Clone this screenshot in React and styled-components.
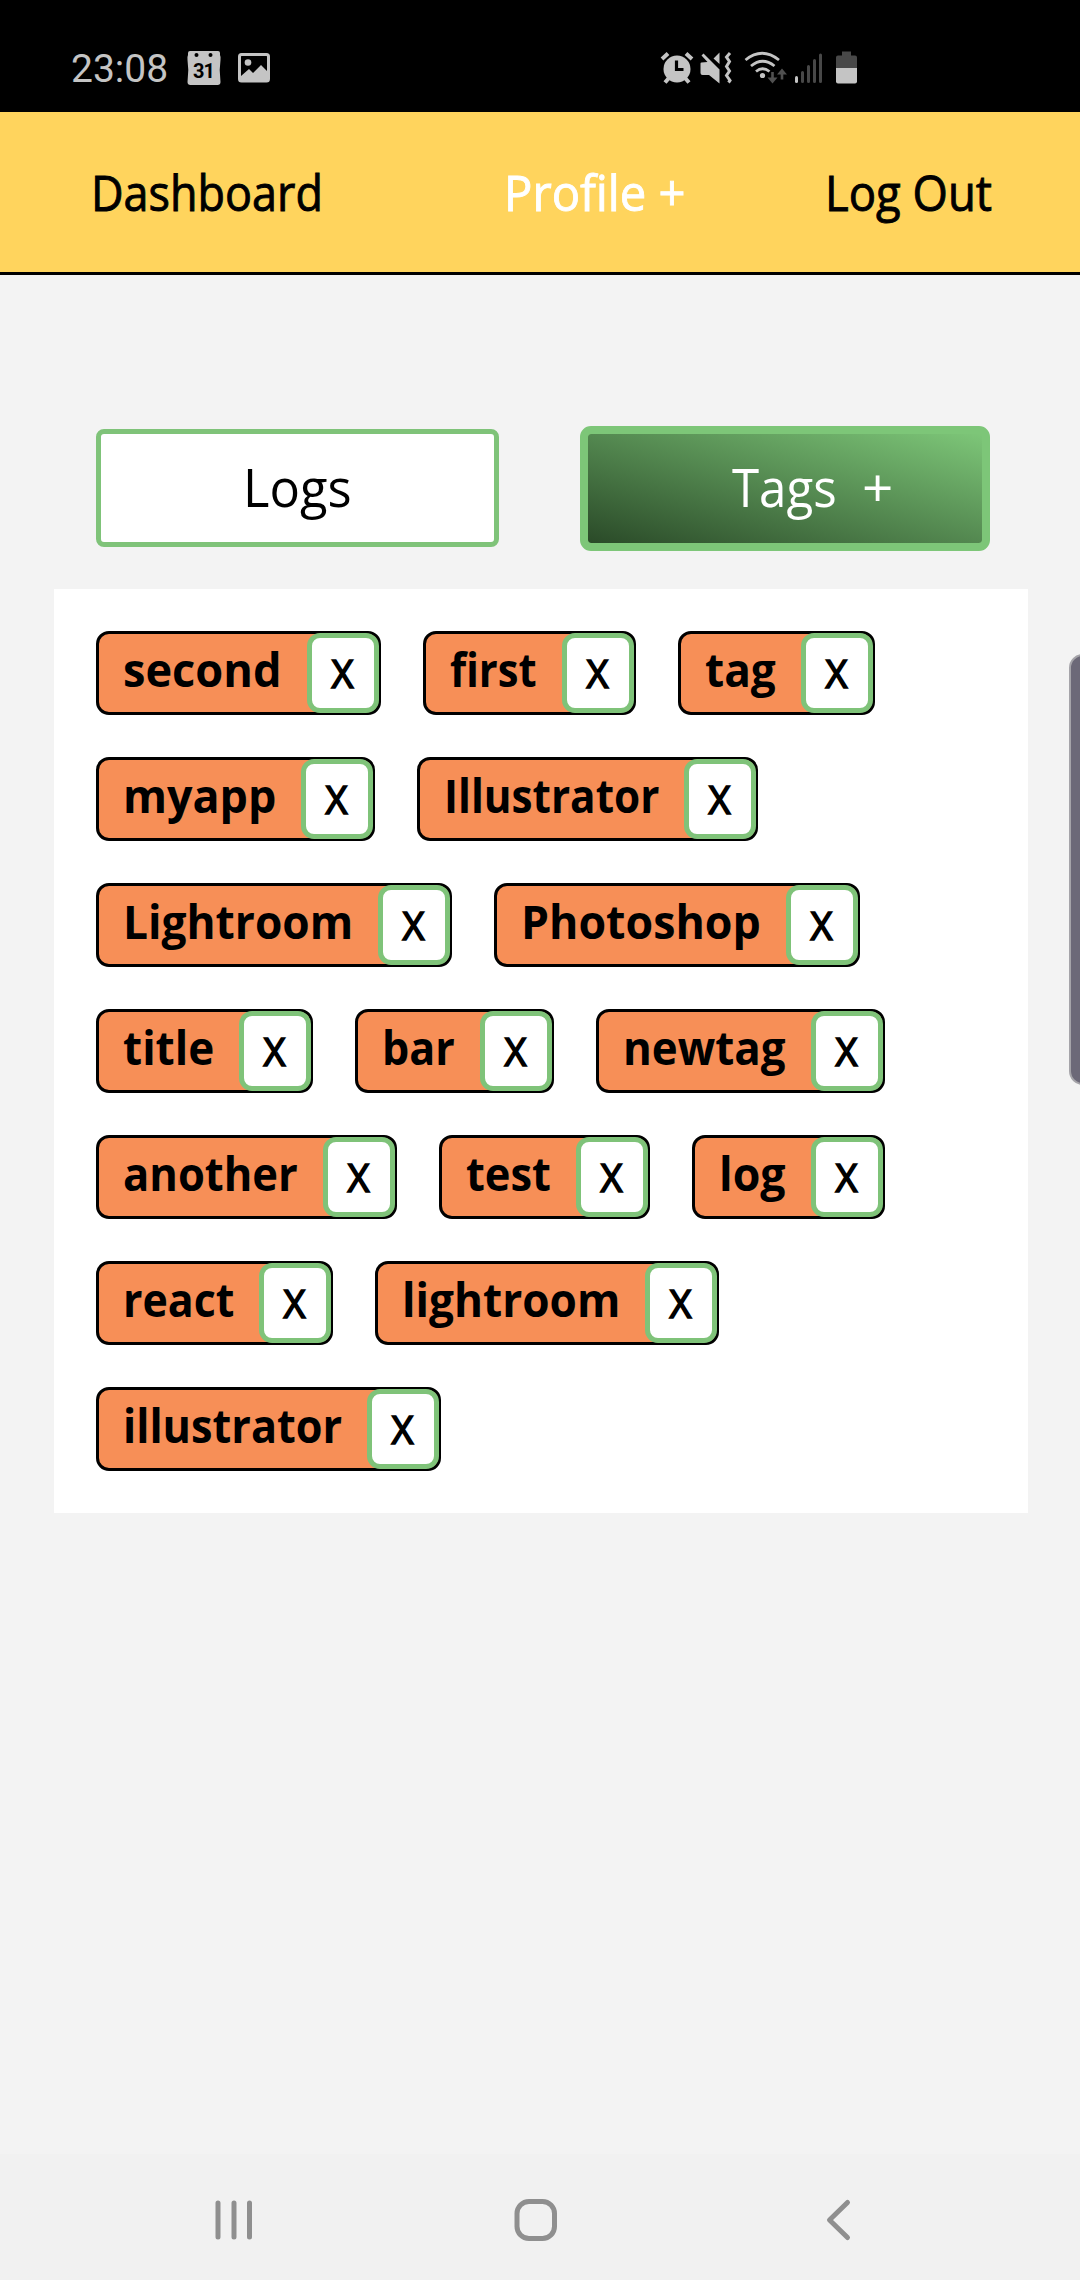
import React, { useLayoutEffect, useRef, useState } from "react";
import styled, { createGlobalStyle } from "styled-components";

const GlobalStyle = createGlobalStyle`
  * { box-sizing: border-box; }
  body { margin: 0; background: #f3f3f3; font-family: "Open Sans", "Noto Sans", sans-serif; }
  button { font: inherit; }
`;

const Screen = styled.div`
  width: 1080px;
  height: 2280px;
  display: flex;
  flex-direction: column;
  background: #f3f3f3;
  position: relative;
  overflow: hidden;
`;

const StatusBar = styled.header`
  height: 112px;
  flex: none;
  background: #000;
  color: #c4c4c4;
  display: flex;
  align-items: flex-start;
  padding: 45px 220px 0 71px;
`;

const Clock = styled.time`
  width: 115px;
  font: 400 39px/48px Roboto, sans-serif;
`;

const StatusIcon = styled.svg`
  display: block;
  flex: none;
  height: 48px;
  width: ${(p) => p.$w}px;
  margin-left: ${(p) => p.$gap || 0}px;
`;

const NavBar = styled.nav`
  height: 163px;
  flex: none;
  background: #ffd45d;
  border-bottom: 3px solid #000;
  display: grid;
  grid-template-columns: 413px 321px auto;
  align-items: center;
  padding-left: 91px;
`;

const NavLink = styled.a`
  color: ${(p) => (p.$active ? "#fff" : "#000")};
  font-size: 49px;
  -webkit-text-stroke: 0.9px currentColor;
  line-height: 66px;
`;

const Main = styled.main`
  flex: 1;
  padding: 150px 52px 0 54px;
`;

const TabRow = styled.div`
  display: flex;
  align-items: center;
  height: 126px;
  padding-left: 42px;
  gap: 81px;
`;

const Tab = styled.button`
  display: flex;
  align-items: center;
  justify-content: center;
  padding: 0 0 3px;
  font-size: 53px;
  line-height: 72px;
  width: 403px;
  height: 118px;
  border: 5px solid #7fc379;
  border-radius: 8px;
  background: #fff;
  color: #000;
`;

const ActiveTab = styled(Tab)`
  width: 410px;
  height: 125px;
  justify-content: flex-start;
  padding-left: 144px;
  gap: 25px;
  border: 8.5px solid #7dc678;
  border-radius: 11px;
  color: #fff;
  background: linear-gradient(to top right, #2a4a28, #7dc678) padding-box, #7dc678 border-box;
`;

const TagCard = styled.section`
  margin-top: 38px;
  height: 924px;
  background: #fff;
  padding: 42px;
  display: flex;
  flex-direction: column;
  gap: 42px;
`;

const TagRow = styled.div`
  display: flex;
  gap: 42px;
`;

const TagBox = styled.div`
  width: ${(p) => p.$w}px;
  height: 84px;
  border: 3px solid #000;
  border-radius: 13px;
  background: #f78f57;
  display: flex;
  align-items: center;
  justify-content: space-between;
  padding-left: 24px;
`;

const TagLabel = styled.span`
  font-size: 46px;
  font-weight: 700;
  line-height: 62px;
  padding-bottom: 9px;
`;

const RemoveButton = styled.button`
  flex: none;
  width: 72px;
  height: 80px;
  margin: -1px;
  padding: 0 1px 0 0;
  border: 5px solid #7fc379;
  border-radius: 13px;
  background: #fff;
  color: #000;
  font-size: 38px;
  -webkit-text-stroke: 1.6px currentColor;
  line-height: 52px;
  text-align: center;
`;

const FitBox = styled.span`
  display: block;
  width: ${(p) => p.$w}px;
  white-space: nowrap;
`;

const FitInner = styled.span`
  display: inline-block;
  vertical-align: top;
  transform-origin: left center;
`;

const EdgeHandle = styled.div`
  position: absolute;
  left: 1069px;
  top: 654px;
  width: 30px;
  height: 431px;
  border: 2px solid #a5a4a9;
  border-radius: 14px;
  background: #6c6978;
`;

const SystemNav = styled.footer`
  height: 126px;
  flex: none;
  background: #f1f1f1;
  display: flex;
  align-items: center;
  padding: 6px 0 0 213px;
`;

const SystemIcon = styled.svg`
  display: block;
  width: 44px;
  height: 44px;
  flex: none;
  margin-right: ${(p) => p.$after || 0}px;
`;

function FitText({ width, children }) {
  const ref = useRef(null);
  const [scale, setScale] = useState(1);
  useLayoutEffect(() => {
    const natural = ref.current.offsetWidth;
    if (natural) setScale(width / natural);
  }, [width, children]);
  return (
    <FitBox $w={width}>
      <FitInner ref={ref} style={{ transform: `scaleX(${scale})` }}>
        {children}
      </FitInner>
    </FitBox>
  );
}

const TAG_ROWS = [
  [["second", 285], ["first", 213], ["tag", 197]],
  [["myapp", 279], ["Illustrator", 341]],
  [["Lightroom", 356], ["Photoshop", 366]],
  [["title", 217], ["bar", 199], ["newtag", 289]],
  [["another", 301], ["test", 211], ["log", 193]],
  [["react", 237], ["lightroom", 344]],
  [["illustrator", 345]],
];

function Tag({ name, width }) {
  return (
    <TagBox $w={width}>
      <TagLabel>
        <FitText width={width - 126}>{name}</FitText>
      </TagLabel>
      <RemoveButton>X</RemoveButton>
    </TagBox>
  );
}

/* Each status icon uses a 48-unit tall viewBox in screen coordinates */
function StatusIcons() {
  return (
    <>
      <StatusIcon $w={36} viewBox="186 45 36 48" fill="#c4c4c4">
        <path d="M190 51h28q2 0 2 2v2q1 2 .5 5l-.8 10 .8 12q0 3-3 3h-27q-3 0-3-3l.8-12-.8-10q-.5-3 .5-5v-2q0-2 2-2z" />
        <circle cx="196.500" cy="55" r="2" fill="#000" />
        <circle cx="210.500" cy="55" r="2" fill="#000" />
        <text x="203.500" y="78" textAnchor="middle" fontFamily="Roboto" fontWeight="700" fontSize="20" letterSpacing="-1" fill="#000">31</text>
      </StatusIcon>
      <StatusIcon $w={34} $gap={15} viewBox="237 45 34 48" fill="none">
        <rect x="239.500" y="54.500" width="29" height="26.500" rx="2" stroke="#c4c4c4" strokeWidth="3" />
        <circle cx="248" cy="62.500" r="3.300" fill="#c4c4c4" />
        <path d="M241 76l8-7 4 4 8-8 7 7v8h-27z" fill="#c4c4c4" />
      </StatusIcon>
      <StatusIcon $w={34} $gap={389} viewBox="660 45 34 48" fill="#c4c4c4">
        <circle cx="677" cy="69" r="13.500" />
        <path d="M662 59l6-5.500M692 59l-6-5.500M668.500 78.500l-3.500 4M685.500 78.500l3.500 4" stroke="#c4c4c4" strokeWidth="4" />
        <path d="M676.500 60.500v9h7" fill="none" stroke="#000" strokeWidth="3.200" />
      </StatusIcon>
      <StatusIcon $w={32} $gap={6} viewBox="700 45 32 48" fill="#c4c4c4">
        <path d="M701.500 62.500q-1 0-1 1v9.500q0 2 2 2h6.500l10.500 8.500V69.500L703.500 53.500l-2 2 6 6.500zM713.500 58.500l6-6v11.500z" />
        <path d="M730 53l-3.500 4 3 4.500-3 5 3 4.500-3 4.500 3.500 5-1.500 2" fill="none" stroke="#c4c4c4" strokeWidth="3" />
      </StatusIcon>
      <StatusIcon $w={43} $gap={12} viewBox="744 45 43 48" fill="none">
        <path d="M745.500 60q16.500-13.500 33.500 0M751 66q11.500-9.500 23.500 0M756 71.500q6.500-5.500 13.500 0" stroke="#c4c4c4" strokeWidth="2.800" />
        <circle cx="762.500" cy="75.500" r="2.600" fill="#c4c4c4" />
        <path d="M772.500 72v7M782 79.500v-7" stroke="#505050" strokeWidth="2.600" />
        <path d="M767.500 77.500h10l-5 6zM777 74.500h10l-5-6z" fill="#505050" />
      </StatusIcon>
      <StatusIcon $w={29} $gap={7} viewBox="794 45 29 48" strokeWidth="3" strokeLinecap="round">
        <path d="M796.500 77.500v4" stroke="#c4c4c4" />
        <path d="M802.500 72.500v9M808.500 66.500v15M814.500 60.500v21M820.500 55v26.500" stroke="#484848" />
      </StatusIcon>
      <StatusIcon $w={22} $gap={12} viewBox="835 45 22 48">
        <path d="M842 51.500h9v4h4q2 0 2 2V69h-21V57.500q0-2 2-2h4z" fill="#484848" />
        <path d="M836 68h21v13.500q0 2-2 2h-17q-2 0-2-2z" fill="#c4c4c4" />
      </StatusIcon>
    </>
  );
}

export default function App() {
  return (
    <Screen>
      <GlobalStyle />
      <StatusBar>
        <Clock>23:08</Clock>
        <StatusIcons />
      </StatusBar>
      <NavBar>
        <NavLink><FitText width={232}>Dashboard</FitText></NavLink>
        <NavLink $active><FitText width={181}>Profile +</FitText></NavLink>
        <NavLink><FitText width={167}>Log Out</FitText></NavLink>
      </NavBar>
      <Main>
        <TabRow>
          <Tab><FitText width={109}>Logs</FitText></Tab>
          <ActiveTab>
            <FitText width={105}>Tags</FitText>
            <FitText width={31}>+</FitText>
          </ActiveTab>
        </TabRow>
        <TagCard>
          {TAG_ROWS.map((row, i) => (
            <TagRow key={i}>
              {row.map(([name, width]) => (
                <Tag key={name} name={name} width={width} />
              ))}
            </TagRow>
          ))}
        </TagCard>
      </Main>
      <EdgeHandle />
      <SystemNav>
        <SystemIcon $after={257} viewBox="213 2198 44 44" fill="none" stroke="#8f8f8f" strokeWidth="5" strokeLinecap="round">
          <path d="M218 2203v34M234 2203v34M249.500 2203v34" />
        </SystemIcon>
        <SystemIcon $after={259} viewBox="514 2198 44 44" fill="none" stroke="#8f8f8f" strokeWidth="5">
          <rect x="517" y="2201.500" width="37.500" height="37" rx="12" />
        </SystemIcon>
        <SystemIcon viewBox="817 2198 44 44" fill="none" stroke="#8f8f8f" strokeWidth="5" strokeLinecap="round" strokeLinejoin="round">
          <path d="M847.500 2202.500l-18 17.500 18 17.500" />
        </SystemIcon>
      </SystemNav>
    </Screen>
  );
}
